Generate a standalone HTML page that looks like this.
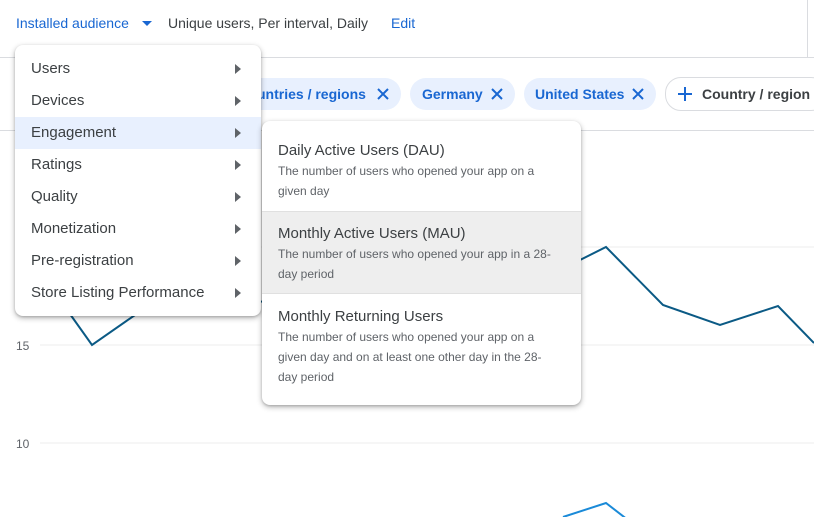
<!DOCTYPE html>
<html><head><style>
body{margin:0;width:814px;height:517px;overflow:hidden;background:#fff;font-family:"Liberation Sans",Roboto,sans-serif;position:relative}
.a{position:absolute}
.chip{position:absolute;top:78px;height:32px;border-radius:16px;background:#e8f0fe;color:#1967d2;font-size:14px;font-weight:bold;line-height:32px;white-space:nowrap}
.chip svg.x{position:absolute;right:11px;top:9px}
.menu{position:absolute;background:#fff;border-radius:8px;box-shadow:0 2px 6px rgba(0,0,0,.3),0 1px 2px rgba(0,0,0,.15)}
.mi{position:absolute;left:0;right:0;height:32px;line-height:32px;padding-left:16px;font-size:15px;color:#3c4043}
.mi:after{content:"";position:absolute;right:20px;top:11px;border-left:6px solid #5f6368;border-top:5px solid transparent;border-bottom:5px solid transparent}
.si{position:absolute;left:0;right:0;padding-left:16px;padding-right:28px}
.si b{display:block;font-weight:normal;font-size:15px;color:#3c4043;margin-bottom:2px}
.si i{display:block;font-style:normal;font-size:12px;color:#5f6368;line-height:20px}
</style></head><body>
<div class="a" style="left:16px;top:15px;font-size:14px;color:#1967d2">Installed audience</div>
<div class="a" style="left:142px;top:21px;border-top:5px solid #1967d2;border-left:5px solid transparent;border-right:5px solid transparent"></div>
<div class="a" style="left:168px;top:15px;font-size:14px;color:#3c4043">Unique users, Per interval, Daily</div>
<div class="a" style="left:391px;top:15px;font-size:14px;color:#1967d2">Edit</div>
<div class="a" style="left:807px;top:0;width:1px;height:57px;background:#dadce0"></div>
<div class="a" style="left:0;top:57px;width:814px;height:1px;background:#dadce0"></div>
<div class="a" style="left:0;top:130px;width:814px;height:1px;background:#dadce0"></div>
<div class="chip" style="left:200px;width:201px"><span style="position:absolute;left:57px">untries / regions</span><svg class="x" width="14" height="14"><path d="M2 2L12 12M12 2L2 12" stroke="#1967d2" stroke-width="2"/></svg></div>
<div class="chip" style="left:410px;width:105px"><span style="position:absolute;left:12px">Germany</span><svg class="x" width="14" height="14"><path d="M2 2L12 12M12 2L2 12" stroke="#1967d2" stroke-width="2"/></svg></div>
<div class="chip" style="left:524px;width:132px"><span style="position:absolute;left:11px">United States</span><svg class="x" width="14" height="14"><path d="M2 2L12 12M12 2L2 12" stroke="#1967d2" stroke-width="2"/></svg></div>
<div class="chip" style="left:665px;width:160px;background:#fff;border:1px solid #dadce0;top:77px;color:#3c4043"><svg style="position:absolute;left:11px;top:8px" width="16" height="16"><path d="M8 1V15M1 8H15" stroke="#1967d2" stroke-width="2"/></svg><span style="position:absolute;left:36px">Country / region</span></div>
<svg class="a" style="left:0;top:0" width="814" height="517">
<line x1="40" y1="247" x2="814" y2="247" stroke="#eee"/>
<line x1="40" y1="345" x2="814" y2="345" stroke="#eee"/>
<line x1="40" y1="443" x2="814" y2="443" stroke="#eee"/>
<polyline points="60,300 92,345 135,315 560,270 606,247 663,305 720,325 778,306 814,343" fill="none" stroke="#0b5a85" stroke-width="2"/>
<polyline points="563,517 606,503 628,520" fill="none" stroke="#1a8ad8" stroke-width="2"/>
<text x="16" y="350" font-size="12" fill="#5f6368" font-family="Liberation Sans">15</text>
<text x="16" y="448" font-size="12" fill="#5f6368" font-family="Liberation Sans">10</text>
</svg>
<div class="menu" style="left:15px;top:45px;width:246px;height:271px">
<div class="mi" style="top:8px">Users</div>
<div class="mi" style="top:40px">Devices</div>
<div class="mi" style="top:72px;background:#e8f0fe">Engagement</div>
<div class="mi" style="top:104px">Ratings</div>
<div class="mi" style="top:136px">Quality</div>
<div class="mi" style="top:168px">Monetization</div>
<div class="mi" style="top:200px">Pre-registration</div>
<div class="mi" style="top:232px">Store Listing Performance</div>
</div>
<div class="menu" style="left:262px;top:121px;width:319px;height:284px;overflow:hidden">
<div class="si" style="top:0;height:90px;padding-top:21px;box-sizing:border-box"><b>Daily Active Users (DAU)</b><i>The number of users who opened your app on a given day</i></div>
<div class="si" style="top:90px;height:83px;background:#eee;border-top:1px solid #e0e0e0;border-bottom:1px solid #e0e0e0;padding-top:13px;box-sizing:border-box"><b>Monthly Active Users (MAU)</b><i>The number of users who opened your app in a 28-day period</i></div>
<div class="si" style="top:173px;padding-top:14px"><b>Monthly Returning Users</b><i>The number of users who opened your app on a given day and on at least one other day in the 28-day period</i></div>
</div>
</body></html>
